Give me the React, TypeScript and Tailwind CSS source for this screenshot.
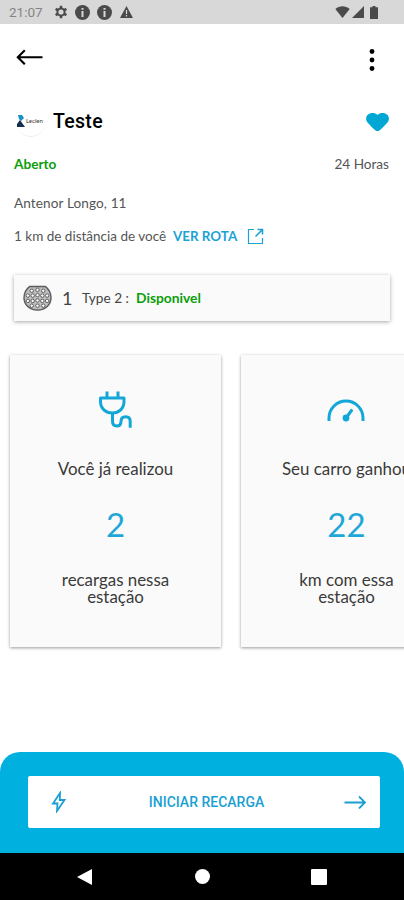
import type { ReactNode } from "react";

type StatCardProps = {
  icon: ReactNode;
  title: string;
  value: string;
  lines: [string, string];
};

const CONNECTOR_HOLES = [
  [9, 6], [15, 5], [21, 6],
  [5, 11], [10, 11], [15, 10.5], [20, 11], [25, 11],
  [5, 16.5], [10, 16.5], [15, 16], [20, 16.5], [25, 16.5],
  [9, 21.5], [15, 21.5], [21, 21.5],
];

function StatusBar() {
  return (
    <div className="flex h-6 shrink-0 items-center justify-between bg-[#d8d8d8] pr-[26px] pl-[9px] text-[#4a4a4a]">
      <div className="flex items-center">
        <span className="w-[45px] font-[family-name:Roboto] text-[13.5px] text-[#858585]">21:07</span>
        <svg className="size-3.5" viewBox="0 0 14 14" fill="none" stroke="currentColor">
          <circle cx="7" cy="7" r="3.6" strokeWidth="2" />
          <path
            d="M7 0.8v2.4M7 10.8v2.4M1.6 3.9l2.1 1.2M10.3 8.9l2.1 1.2M1.6 10.1l2.1-1.2M10.3 5.1l2.1-1.2"
            strokeWidth="2.4"
          />
        </svg>
        <InfoIcon className="ml-[7px] size-[15px]" />
        <InfoIcon className="ml-[7px] size-[15px]" />
        <svg className="ml-[8px] h-3 w-[13px]" viewBox="0 0 13 12">
          <path d="M6.5 0 13 12H0z" fill="currentColor" />
          <path d="M6.5 4v4M6.5 9v1.5" stroke="#d8d8d8" strokeWidth="1.2" />
        </svg>
      </div>
      <div className="flex items-center">
        <svg className="h-3 w-[15px]" viewBox="0 0 15 12" fill="currentColor">
          <path d="M0.3 3C4.5-0.7 10.5-0.7 14.7 3L7.5 12z" />
        </svg>
        <svg className="ml-[2px] size-3" viewBox="0 0 12 12" fill="currentColor">
          <path d="M12 0v12H0z" />
        </svg>
        <svg className="ml-[6px] h-[13px] w-2" viewBox="0 0 8 13" fill="currentColor">
          <path d="M2.5 0h3v1.3H8V13H0V1.3h2.5z" />
        </svg>
      </div>
    </div>
  );
}

function InfoIcon({ className }: { className: string }) {
  return (
    <svg className={className} viewBox="0 0 15 15">
      <circle cx="7.5" cy="7.5" r="7.5" fill="currentColor" />
      <path d="M7.5 3v1.8M7.5 6v6" stroke="#d8d8d8" strokeWidth="2" />
    </svg>
  );
}

function TopBar() {
  return (
    <header className="flex h-[67px] shrink-0 items-center justify-between pr-[29px] pl-4">
      <svg className="mb-[2px] h-4 w-7" viewBox="0 0 28 16" fill="none" stroke="#000" strokeWidth="2.1">
        <path d="M26.5 8.3H1.5M8.8 1.3l-7 7 7 7" />
      </svg>
      <svg className="mt-[4px] h-[22px] w-[6px]" viewBox="0 0 6 22">
        <circle cx="3" cy="2.5" r="2.4" />
        <circle cx="3" cy="11" r="2.4" />
        <circle cx="3" cy="19.5" r="2.4" />
      </svg>
    </header>
  );
}

function StationInfo() {
  return (
    <section className="flex flex-col pr-[15px] pl-3.5 text-[13.6px] text-[#555]">
      <div className="flex h-[60px] items-center pt-px">
        <div className="ml-0.5 flex size-[30px] items-center gap-px rounded-full border-b border-[#ececec] pl-px">
          <svg className="h-3 w-2 shrink-0" viewBox="0 0 8 12">
            <path d="M1 0h4l2 3-3 3-2-2z" fill="#1593c7" />
            <path d="M3 5 8 12H0V9z" fill="#14304c" />
          </svg>
          <span className="text-[6px] leading-none text-[#333]">Leclen</span>
        </div>
        <h1 className="ml-[7px] font-[family-name:Roboto] text-[19.5px] font-medium tracking-[0.3px] text-black">
          Teste
        </h1>
        <svg className="ml-auto h-[18px] w-[23px]" viewBox="0 0 23 19" preserveAspectRatio="none" fill="#00a7d5">
          <path d="M11.5 19C9 18.8 7.5 16.5 2 10.5-0.6 8-0.4 4 1.8 1.9 4.4-0.7 8.7-0.5 11.5 2 14.3-0.5 18.6-0.7 21.2 1.9 23.4 4 23.6 8 21 10.5 15.5 16.5 14 18.8 11.5 19z" />
        </svg>
      </div>
      <div className="flex h-[26px] items-center justify-between">
        <span className="font-bold text-[#0a9e0a]">Aberto</span>
        <span>24 Horas</span>
      </div>
      <p className="mt-[13px] flex h-[26px] items-center tracking-[0.1px]">Antenor Longo, 11</p>
      <div className="mt-[7px] flex h-[26px] items-center">
        <span className="w-[159px] text-[13.5px] whitespace-nowrap">1 km de distância de você</span>
        <a className="text-[13.4px] font-bold text-[#1ba3d6]" href="#">VER ROTA</a>
        <svg className="ml-[10px] size-[17px]" viewBox="0 0 17 17" fill="none" stroke="#1ba3d6">
          <path d="M7 1.5H1.5v14h14V10" strokeWidth="1.2" />
          <path d="M8.5 8.5 15 2M10.5 1.5h5v5" strokeWidth="1.6" />
        </svg>
      </div>
    </section>
  );
}

function ConnectorRow() {
  return (
    <div className="mx-3.5 mt-[26px] flex h-[46px] shrink-0 items-center bg-[#fafafa] pl-[9px] text-[#444] shadow-[0_1px_4px_rgba(0,0,0,0.35)]">
      <svg className="h-[26px] w-[29px]" viewBox="0 0 30 27" fill="none" stroke="#5c5c5c">
        <path
          d="M7 1.5h16c4 3 6 7 6 12 0 6-5 12.5-14 12.5S1 19.5 1 13.5c0-5 2-9 6-12z"
          fill="#bdbdbd"
          strokeWidth="1.5"
        />
        {CONNECTOR_HOLES.map(([x, y]) => (
          <circle key={`${x}-${y}`} cx={x} cy={y} r="1.8" fill="#fafafa" />
        ))}
      </svg>
      <span className="ml-[10px] w-5 text-[18px]">1</span>
      <span className="w-[54px] text-[13.6px] whitespace-pre">Type 2 :</span>
      <span className="text-[13.8px] font-bold text-[#0a9e0a]">Disponivel</span>
    </div>
  );
}

function PlugIcon() {
  return (
    <svg
      className="h-[38px] w-9"
      viewBox="0 0 36 38"
      fill="none"
      stroke="#12a7d8"
      strokeWidth="3"
      strokeLinejoin="round"
    >
      <path d="M9 1.5v6M20 1.5v6M2.5 8h23.5v3.500c0 7-5 11.500-11.700 11.500S2.500 18.500 2.500 11.500z" />
      <path d="M14.500 23v8c0 3.500 1.500 5 4.300 5s4.200-1.700 4.200-4.500c0-3 1.800-4.700 4.700-4.700s4.500 1.700 4.500 4.700v6.300" />
    </svg>
  );
}

function GaugeIcon() {
  return (
    <svg className="mr-[2px] h-[38px] w-[38px]" viewBox="0 0 38 38" fill="none" stroke="#12a7d8" strokeWidth="3">
      <path d="M2 31v-3a17 17 0 0 1 34 0v3" />
      <circle cx="19" cy="28" r="3.4" fill="#12a7d8" stroke="none" />
      <path d="m19 28 6.2-8.500" />
    </svg>
  );
}

function StatCard({ icon, title, value, lines }: StatCardProps) {
  return (
    <article className="flex h-[292px] w-[211px] shrink-0 flex-col items-center bg-[#fafafa] pt-[35px] text-[#3a3a3a] shadow-[0_1px_3px_rgba(0,0,0,0.4)]">
      {icon}
      <h2 className="mt-[29px] text-[16.900px] leading-6 whitespace-nowrap">{title}</h2>
      <strong className="mt-[23px] text-[33px] leading-10 font-normal text-[#20a7d8]">{value}</strong>
      <p className="mt-[27px] flex flex-col items-center text-[16.900px] leading-[17px]">
        <span>{lines[0]}</span>
        <span>{lines[1]}</span>
      </p>
    </article>
  );
}

function ChargeFooter() {
  return (
    <footer className="mt-auto h-[101px] shrink-0 rounded-t-[20px] bg-[#00b0de] px-[28px] pt-6">
      <button className="flex h-[52px] w-[352px] items-center justify-between rounded-[2px] bg-white pr-[14px] pl-[23px] text-[#1a9fd2]">
        <svg className="h-[22px] w-4" viewBox="0 0 16 22" fill="none" stroke="currentColor" strokeWidth="1.8">
          <path d="M9 2 2 12.5h4.5L6 20l7.5-11H8.8z" />
        </svg>
        <span className="ml-[2px] font-[family-name:Roboto] text-[14px] font-medium">INICIAR RECARGA</span>
        <svg className="h-[14px] w-[22px]" viewBox="0 0 22 14" fill="none" stroke="currentColor" strokeWidth="1.8">
          <path d="M0.5 7.5h20.500M15 1.5l6 6-6 6" />
        </svg>
      </button>
    </footer>
  );
}

function NavigationBar() {
  return (
    <nav className="flex h-[47px] shrink-0 items-center justify-between bg-black px-[77px]">
      <svg className="h-4 w-[15px]" viewBox="0 0 15 16" fill="#fff">
        <path d="M15 0v16L0 8z" />
      </svg>
      <span className="ml-[2px] size-[15px] rounded-full bg-white" />
      <span className="size-4 rounded-[1px] bg-white" />
    </nav>
  );
}

export default function App() {
  return (
    <main className="flex h-[900px] w-[404px] flex-col overflow-hidden bg-white font-[family-name:Lato,sans-serif]">
      <StatusBar />
      <TopBar />
      <StationInfo />
      <ConnectorRow />
      <div className="flex shrink-0 gap-5 overflow-hidden px-[10px] pt-[34px] pb-2">
        <StatCard icon={<PlugIcon />} title="Você já realizou" value="2" lines={["recargas nessa", "estação"]} />
        <StatCard icon={<GaugeIcon />} title="Seu carro ganhou" value="22" lines={["km com essa", "estação"]} />
      </div>
      <ChargeFooter />
      <NavigationBar />
    </main>
  );
}
